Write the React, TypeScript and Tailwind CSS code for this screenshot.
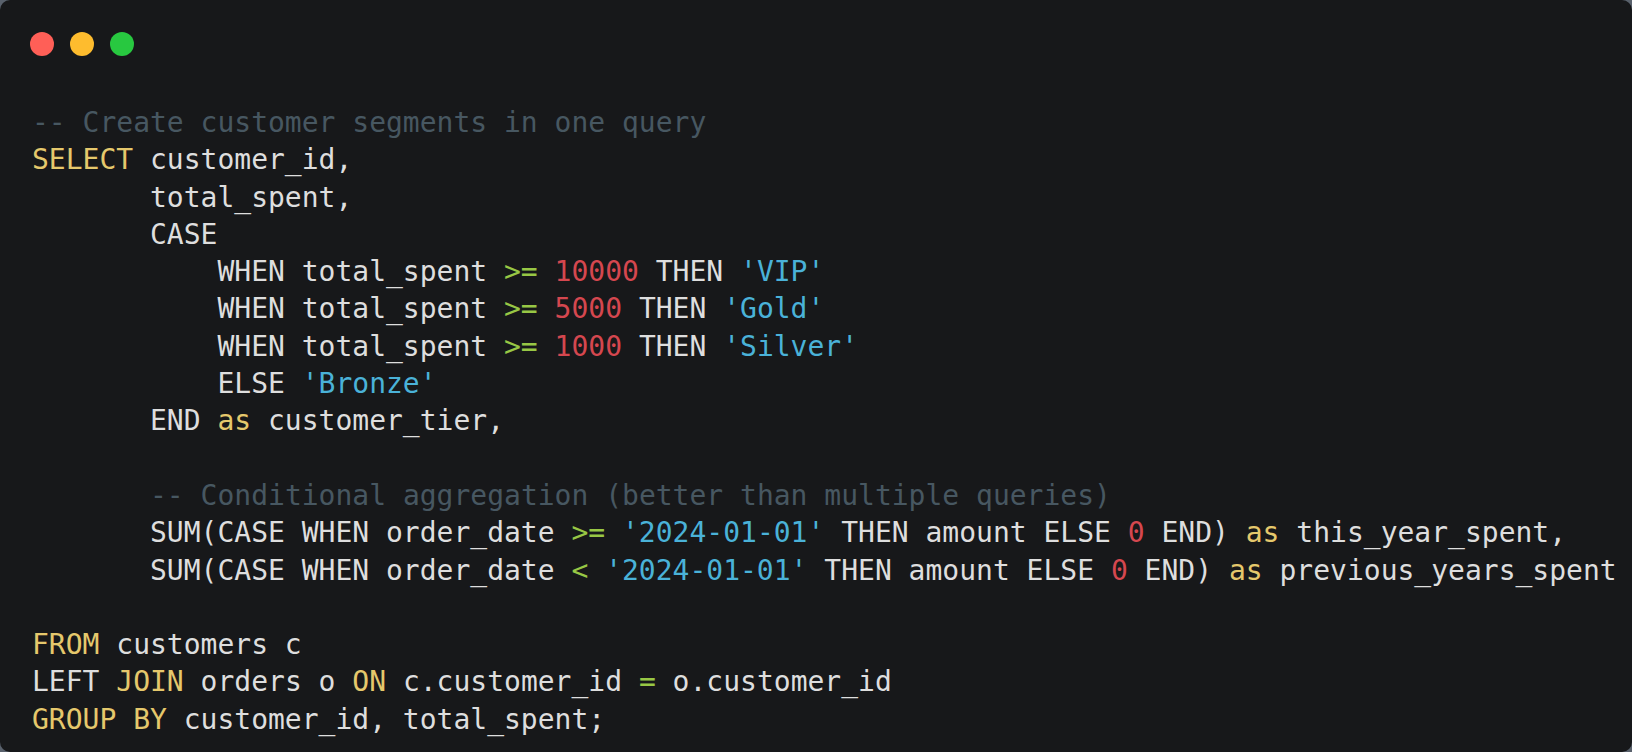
import React from "react";

type Tok = [string, string];

const K = "text-[#e5c86c]";
const T = "text-[#dedede]";
const C = "text-[#475761]";
const N = "text-[#d5474f]";
const S = "text-[#4ab2d8]";
const O = "text-[#98c745]";

const lines: Tok[][] = [
  [[C, "-- Create customer segments in one query"]],
  [[K, "SELECT"], [T, " customer_id,"]],
  [[T, "       total_spent,"]],
  [[T, "       CASE"]],
  [[T, "           WHEN total_spent "], [O, ">="], [T, " "], [N, "10000"], [T, " THEN "], [S, "'VIP'"]],
  [[T, "           WHEN total_spent "], [O, ">="], [T, " "], [N, "5000"], [T, " THEN "], [S, "'Gold'"]],
  [[T, "           WHEN total_spent "], [O, ">="], [T, " "], [N, "1000"], [T, " THEN "], [S, "'Silver'"]],
  [[T, "           ELSE "], [S, "'Bronze'"]],
  [[T, "       END "], [K, "as"], [T, " customer_tier,"]],
  [[T, " "]],
  [[T, "       "], [C, "-- Conditional aggregation (better than multiple queries)"]],
  [
    [T, "       SUM(CASE WHEN order_date "],
    [O, ">="],
    [T, " "],
    [S, "'2024-01-01'"],
    [T, " THEN amount ELSE "],
    [N, "0"],
    [T, " END) "],
    [K, "as"],
    [T, " this_year_spent,"],
  ],
  [
    [T, "       SUM(CASE WHEN order_date "],
    [O, "<"],
    [T, " "],
    [S, "'2024-01-01'"],
    [T, " THEN amount ELSE "],
    [N, "0"],
    [T, " END) "],
    [K, "as"],
    [T, " previous_years_spent"],
  ],
  [[T, " "]],
  [[K, "FROM"], [T, " customers c"]],
  [[T, "LEFT "], [K, "JOIN"], [T, " orders o "], [K, "ON"], [T, " c.customer_id "], [O, "="], [T, " o.customer_id"]],
  [[K, "GROUP BY"], [T, " customer_id, total_spent;"]],
];

export default function App() {
  return (
    <div className="w-[1632px] h-[752px] bg-[#59616c] overflow-hidden">
      <div className="w-full h-full rounded-[10px] bg-[#17181a] flex flex-col">
        <div className="flex gap-4 pl-[30px] pt-[32px]">
          <div className="w-6 h-6 rounded-full bg-[#ff5f57]" />
          <div className="w-6 h-6 rounded-full bg-[#febc2e]" />
          <div className="w-6 h-6 rounded-full bg-[#28c840]" />
        </div>
        <pre
          className="mt-[48px] pl-[32px] text-[28px] leading-[37.3px] whitespace-pre"
          style={{ fontFamily: '"DejaVu Sans Mono", monospace' }}
        >
          {lines.map((l, i) => (
            <div key={i}>
              {l.map(([cls, txt], j) => (
                <span key={j} className={cls}>
                  {txt}
                </span>
              ))}
            </div>
          ))}
        </pre>
      </div>
    </div>
  );
}
